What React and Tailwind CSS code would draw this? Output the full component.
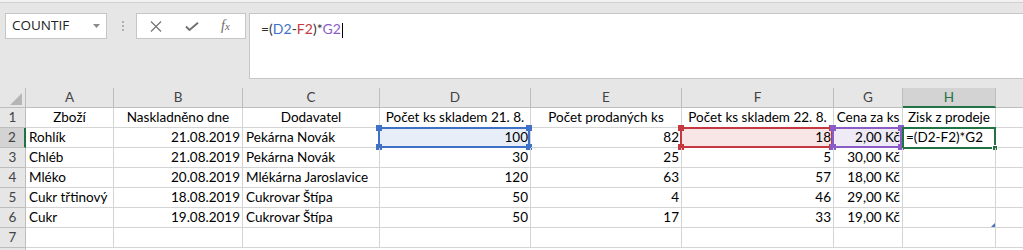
import React from "react";

const rows = [
  ["Rohlík", "21.08.2019", "Pekárna Novák", "100", "82", "18", "2,00 Kč", "=(D2-F2)*G2"],
  ["Chléb", "21.08.2019", "Pekárna Novák", "30", "25", "5", "30,00 Kč", ""],
  ["Mléko", "20.08.2019", "Mlékárna Jaroslavice", "120", "63", "57", "18,00 Kč", ""],
  ["Cukr třtinový", "18.08.2019", "Cukrovar Štípa", "50", "4", "46", "29,00 Kč", ""],
  ["Cukr", "19.08.2019", "Cukrovar Štípa", "50", "17", "33", "19,00 Kč", ""],
  ["", "", "", "", "", "", "", ""],
];

const headers = ["Zboží", "Naskladněno dne", "Dodavatel", "Počet ks skladem 21. 8.", "Počet prodaných ks", "Počet ks skladem 22. 8.", "Cena za ks", "Zisk z prodeje"];

const gridCols = "grid grid-cols-[26px_88px_129px_137px_151px_151px_152px_69px_93px_28px]";

function Handles({ color }) {
  return (
    <>
      <div className={`absolute -left-[4px] -top-[4px] w-[6px] h-[6px] ${color}`} />
      <div className={`absolute -right-[4px] -top-[4px] w-[6px] h-[6px] ${color}`} />
      <div className={`absolute -left-[4px] -bottom-[4px] w-[6px] h-[6px] ${color}`} />
      <div className={`absolute -right-[4px] -bottom-[4px] w-[6px] h-[6px] ${color}`} />
    </>
  );
}

function Overlay({ col }) {
  if (col === 3)
    return (
      <div className="absolute -top-[1px] -left-[2px] right-0 -bottom-[1px] border-2 border-[#3f72c6] bg-[#e8eef8]">
        <Handles color="bg-[#3f72c6]" />
      </div>
    );
  if (col === 5)
    return (
      <div className="absolute -top-[1px] -left-[2px] right-0 -bottom-[1px] border-2 border-[#c3393f] bg-[#f8e5e6]">
        <Handles color="bg-[#c3393f]" />
      </div>
    );
  if (col === 6)
    return (
      <div className="absolute -top-[1px] -left-[2px] right-0 -bottom-[1px] border-2 border-[#8c5cc6] bg-[#eeeaf6]">
        <Handles color="bg-[#8c5cc6]" />
      </div>
    );
  if (col === 7)
    return (
      <div className="absolute -top-[1px] -left-[1px] -right-[1px] -bottom-[2px] border-2 border-[#217346]">
        <div className="absolute -right-[4px] -bottom-[4px] w-[6px] h-[6px] bg-[#217346] border border-white" />
      </div>
    );
  return null;
}

export default function App() {
  return (
    <div className="w-[1023px] h-[250px] overflow-hidden bg-[#e6e6e6] font-['Lato',sans-serif] text-[13.5px] text-black">
      <div className="h-[2px] bg-[#f1f1f1]" />
      <div className="h-[1px] bg-[#d2d2d2]" />
      {/* toolbar */}
      <div className="flex items-start pt-[10px] h-[76px]">
        <div className="ml-[5px] w-[102px] h-[26px] bg-white border border-[#c6c6c6] flex items-center justify-between pl-[6px] pr-[6px]">
          <span className="font-['Open_Sans',sans-serif] text-[13.5px] text-[#222] leading-none">COUNTIF</span>
          <svg width="7" height="4" viewBox="0 0 7 4"><path d="M0 0 L7 0 L3.5 4 Z" fill="#8a8a8a" /></svg>
        </div>
        <div className="ml-[14px] w-[3px] h-[26px] flex flex-col items-center justify-center gap-[2px]">
          <div className="w-[2px] h-[2px] bg-[#b0b0b0]" />
          <div className="w-[2px] h-[2px] bg-[#b0b0b0]" />
          <div className="w-[2px] h-[2px] bg-[#b0b0b0]" />
        </div>
        <div className="ml-[12px] w-[110px] h-[26px] bg-white border border-[#c6c6c6] flex items-center">
          <svg className="ml-[13px]" width="12" height="11" viewBox="0 0 12 11">
            <path d="M1 0.5 L11 10.5 M11 0.5 L1 10.5" stroke="#707070" strokeWidth="1.1" fill="none" />
          </svg>
          <svg className="ml-[23px]" width="14" height="9" viewBox="0 0 14 9">
            <path d="M1 4.5 L4.5 8 L13 0.8" stroke="#707070" strokeWidth="1.9" fill="none" />
          </svg>
          <span className="ml-[22px] font-['Liberation_Serif',serif] italic text-[14px] text-[#6a6a6a] leading-none">
            f<span className="text-[11px]">x</span>
          </span>
        </div>
        <div className="ml-[3px] flex-1 h-[66px] bg-white border border-r-0 border-[#c6c6c6] pl-[11px] pt-[5px]">
          <span className="text-[14px] leading-[18px] text-[#333]">
            =(<span className="text-[#3f72c6]">D2</span>-<span className="text-[#c3393f]">F2</span>)*<span className="text-[#8c5cc6]">G2</span>
          </span>
          <span className="inline-block w-[1px] h-[15px] bg-black align-middle ml-[1px]" />
        </div>
      </div>
      <div className="h-[9px]" />
      {/* column headers */}
      <div className={gridCols}>
        <div className="h-[20px] border-r border-b border-[#bdbdbd] relative">
          <svg className="absolute left-[10px] top-[5px]" width="12" height="12" viewBox="0 0 12 12">
            <path d="M12 0 L12 12 L0 12 Z" fill="#b5b5b5" />
          </svg>
        </div>
        {["A", "B", "C", "D", "E", "F", "G", "H", ""].map((l, i) =>
          l === "H" ? (
            <div key={i} className="h-[20px] bg-[#d3d3d3] border-r border-[#bdbdbd] border-b-2 border-b-[#217346] flex items-center justify-center text-[#217346]">
              {l}
            </div>
          ) : (
            <div key={i} className="h-[20px] border-r border-b border-[#bdbdbd] flex items-center justify-center text-[#444]">
              {l}
            </div>
          )
        )}
      </div>
      {/* row 1 */}
      <div className={`${gridCols} bg-white`}>
        <div className="h-[20px] bg-[#e6e6e6] border-r border-b border-[#bdbdbd] flex items-center justify-center text-[#444]">1</div>
        {headers.map((h, i) => (
          <div key={i} className="h-[20px] border-r border-b border-[#d4d4d4] flex items-center justify-center whitespace-nowrap overflow-visible">
            {h}
          </div>
        ))}
        <div className="h-[20px] border-r border-b border-[#d4d4d4]" />
      </div>
      {rows.map((r, ri) => (
        <div key={ri} className={`${gridCols} bg-white`}>
          {ri === 0 ? (
            <div className="h-[20px] bg-[#d3d3d3] border-r-2 border-r-[#217346] border-b border-b-[#bdbdbd] flex items-center justify-center text-[#444]">
              {ri + 2}
            </div>
          ) : (
            <div className="h-[20px] bg-[#e6e6e6] border-r border-b border-[#bdbdbd] flex items-center justify-center text-[#444]">
              {ri + 2}
            </div>
          )}
          {r.map((c, ci) => {
            const right = ci === 1 || ci === 3 || ci === 4 || ci === 5 || ci === 6;
            return (
              <div key={ci} className="h-[20px] border-r border-b border-[#d4d4d4] relative">
                {ri === 0 && <Overlay col={ci} />}
                <div className={`relative h-full flex items-center whitespace-nowrap ${right ? "justify-end pr-[2px]" : "justify-start pl-[3px]"}`}>
                  {c}
                </div>
                {ri === 4 && ci === 7 && (
                  <svg className="absolute right-[0px] bottom-[0px]" width="4" height="4" viewBox="0 0 4 4">
                    <path d="M4 0 L4 4 L0 4 Z" fill="#3f72c6" />
                  </svg>
                )}
              </div>
            );
          })}
          <div className="h-[20px] border-r border-b border-[#d4d4d4]" />
        </div>
      ))}
      <div className={`${gridCols} bg-white`}>
        <div className="h-[20px] bg-[#e6e6e6] border-r border-[#bdbdbd]" />
      </div>
    </div>
  );
}
